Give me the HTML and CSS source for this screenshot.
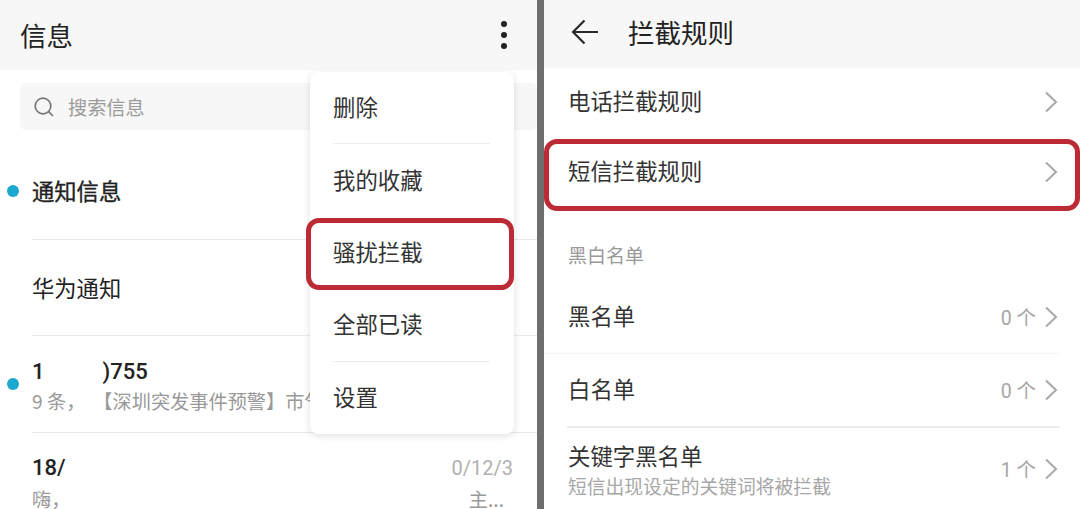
FILE: index.html
```html
<!DOCTYPE html>
<html lang="zh-CN">
<head>
    <meta charset="UTF-8">
    <meta name="viewport" content="width=device-width, initial-scale=1.0">
    <title>拦截规则</title>
    <link rel="stylesheet" href="styles.css">
</head>
<body>
    <div class="screens">
        <section class="pane pane-left">
            <header class="bar bar-left">
                <h1 class="bar-title">信息</h1>
                <svg class="more" width="8" height="30" viewBox="0 0 8 30"><circle cx="4" cy="4" r="3"/><circle cx="4" cy="15" r="3"/><circle cx="4" cy="26" r="3"/></svg>
            </header>

            <div class="search">
                <svg class="search-icon" width="22" height="22" viewBox="0 0 22 22"><circle cx="10" cy="10" r="7.8"/><path d="M15.6 15.6 L20 20"/></svg>
                <span>搜索信息</span>
            </div>

            <div class="msg msg-solo">
                <i class="dot dot-first"></i>
                <div class="msg-name msg-name-cn msg-strong">通知信息</div>
            </div>
            <div class="msg msg-solo msg-second">
                <div class="msg-name msg-name-cn">华为通知</div>
            </div>
            <div class="msg msg-third">
                <i class="dot"></i>
                <div class="msg-name">1<span class="gap-a"></span>)755</div>
                <div class="msg-text msg-clip">9 条，<span class="gap-b"></span>【深圳突发事件预警】市气</div>
            </div>
            <div class="msg msg-last">
                <div class="msg-top">
                    <div class="msg-name">18/</div>
                    <div class="msg-date">0/12/3</div>
                </div>
                <div class="msg-top msg-bottom">
                    <div class="msg-text">嗨，</div>
                    <div class="msg-text msg-tail">主...</div>
                </div>
            </div>

            <div class="menu">
                <div class="menu-item">删除</div>
                <div class="menu-item">我的收藏</div>
                <div class="menu-item marked">骚扰拦截</div>
                <div class="menu-item">全部已读</div>
                <div class="menu-item">设置</div>
            </div>
        </section>

        <section class="pane pane-right">
            <header class="bar bar-right">
                <svg class="back" width="28" height="26" viewBox="0 0 28 26"><path d="M13.5 1.5 L2 13 L13.5 24.5 M2 13 H27"/></svg>
                <h1 class="bar-title">拦截规则</h1>
            </header>

            <div class="rule rule-a">
                <span>电话拦截规则</span>
                <svg class="chev" width="14" height="22" viewBox="0 0 14 22"><path d="M2 1.5 L12 11 L2 20.5"/></svg>
            </div>
            <div class="rule rule-b marked">
                <span>短信拦截规则</span>
                <svg class="chev" width="14" height="22" viewBox="0 0 14 22"><path d="M2 1.5 L12 11 L2 20.5"/></svg>
            </div>

            <div class="group-title">黑白名单</div>

            <div class="rule rule-c">
                <span>黑名单</span>
                <span class="count">0 个</span>
                <svg class="chev" width="14" height="22" viewBox="0 0 14 22"><path d="M2 1.5 L12 11 L2 20.5"/></svg>
            </div>
            <div class="rule rule-d">
                <span>白名单</span>
                <span class="count">0 个</span>
                <svg class="chev" width="14" height="22" viewBox="0 0 14 22"><path d="M2 1.5 L12 11 L2 20.5"/></svg>
            </div>
            <div class="rule rule-e">
                <div class="rule-body">
                    <div class="rule-name">关键字黑名单</div>
                    <div class="rule-note">短信出现设定的关键词将被拦截</div>
                </div>
                <span class="count">1 个</span>
                <svg class="chev" width="14" height="22" viewBox="0 0 14 22"><path d="M2 1.5 L12 11 L2 20.5"/></svg>
            </div>
        </section>
    </div>
</body>
</html>
```

FILE: styles.css
```css
html, body {
    margin: 0;
    height: 509px;
    overflow: hidden;
    background: #fff;
    font-family: "Noto Sans CJK SC", "Noto Sans", sans-serif;
    color: #2a2a2a;
}
.screens {
    display: flex;
    width: 1080px;
    height: 509px;
    background: #6e6e6e;
    gap: 7px;
}
.pane {
    position: relative;
    height: 509px;
    background: #fff;
    overflow: hidden;
}
.pane-left {
    width: 537px;
}
.pane-right {
    width: 536px;
}

/* top bars */
.bar {
    display: flex;
    align-items: center;
    background: #f7f7f7;
}
.bar-left {
    height: 70px;
    padding: 0 29px 0 20px;
    justify-content: space-between;
}
.bar-right {
    height: 68px;
    padding: 0 0 5px 27px;
    box-sizing: border-box;
    gap: 29px;
}
.bar-title {
    margin: 0;
    font-size: 26.5px;
    font-weight: 400;
    line-height: 36px;
    color: #222;
}
.more {
    fill: #222;
}
.back {
    fill: none;
    stroke: #2a2a2a;
    stroke-width: 2.2;
}

/* search */
.search {
    display: flex;
    align-items: center;
    gap: 13px;
    height: 47px;
    margin: 13px 0 14px 20px;
    padding-left: 13px;
    background: #f7f7f7;
    border-radius: 6px;
    color: #9b9b9b;
    font-size: 19.2px;
}
.search-icon {
    fill: none;
    stroke: #777;
    stroke-width: 1.7;
}

/* message list */
.msg {
    position: relative;
    display: flex;
    flex-direction: column;
    justify-content: center;
    box-sizing: border-box;
    height: 97px;
    margin-left: 32px;
    border-bottom: 1px solid #e9e9e9;
}
.msg-solo {
    height: 96px;
    padding-bottom: 4px;
}
.msg-second {
    padding-bottom: 2px;
}
.msg-third {
    padding-top: 4px;
}
.msg-last {
    padding: 20px 24px 0 0;
    justify-content: flex-start;
    border-bottom: 0;
}
.msg-top {
    display: flex;
    justify-content: space-between;
}
.msg-bottom {
    margin-top: 5px;
}
.msg-bottom .msg-text {
    line-height: 22px;
}
.msg-name {
    font-size: 22px;
    line-height: 30px;
    font-family: "Roboto", "Noto Sans CJK SC", sans-serif;
    font-weight: 500;
    color: #222;
}
.msg-name-cn {
    font-family: "Noto Sans CJK SC", sans-serif;
    font-size: 22.3px;
    font-weight: 400;
}
.msg-strong {
    -webkit-text-stroke: 0.35px #222;
}
.gap-a {
    display: inline-block;
    width: 58px;
}
.gap-b {
    display: inline-block;
    width: 8px;
}
.msg-text {
    font-size: 19.2px;
    line-height: 28px;
    color: #999;
    white-space: nowrap;
}
.msg-clip {
    width: 278px;
    overflow: hidden;
}
.msg-tail {
    margin-right: 9px;
}
.msg-date {
    font-size: 20px;
    line-height: 30px;
    color: #b0b0b0;
    font-family: "Roboto", sans-serif;
}
.dot {
    position: absolute;
    left: -25px;
    top: 50%;
    width: 12px;
    height: 12px;
    margin-top: -6px;
    border-radius: 50%;
    background: #1ba9cf;
}
.dot-first {
    margin-top: -7px;
}

/* overflow menu */
.menu {
    position: absolute;
    left: 310px;
    top: 72px;
    width: 204px;
    height: 362px;
    background: #fff;
    border-radius: 8px;
    box-shadow: 0 2px 7px rgba(0, 0, 0, 0.13);
}
.menu-item {
    position: relative;
    display: flex;
    align-items: center;
    box-sizing: border-box;
    height: 72.4px;
    margin: 0 24px 0 23px;
    padding-bottom: 3px;
    border-bottom: 1px solid #ececec;
    font-size: 22.4px;
    color: #333;
}
.menu-item:nth-child(2),
.menu-item:nth-child(3),
.menu-item:nth-child(5) {
    border-bottom: 0;
}

/* red annotation frames */
.marked::after {
    content: "";
    position: absolute;
    box-sizing: border-box;
    border: 5px solid #bb2a35;
    border-radius: 13px;
    pointer-events: none;
}
.menu-item.marked::after {
    left: -27px;
    right: -24px;
    top: 1px;
    bottom: -1px;
}
.rule.marked::after {
    left: 0;
    right: 0;
    top: 3px;
    bottom: -4px;
}

/* rules */
.rule {
    position: relative;
    display: flex;
    align-items: center;
    padding: 0 22px 0 24px;
    font-size: 22.4px;
    color: #333;
}
.rule-a {
    height: 68px;
}
.rule-b {
    height: 71px;
}
.rule-c {
    height: 73px;
    margin-right: 20px;
    padding-right: 2px;
    border-bottom: 1px solid #f4f4f4;
    box-sizing: border-box;
}
.rule-d {
    height: 72px;
    margin-right: 20px;
    padding-right: 2px;
    box-sizing: border-box;
}
.rule-e {
    height: 83px;
    margin: 0 20px 0 23px;
    padding: 0 2px 0 1px;
    border-top: 2px solid #ececec;
    box-sizing: border-box;
}
.rule > span:first-child,
.rule > div:first-child {
    flex: 1;
    margin-bottom: 4px;
}
.rule > .rule-body {
    margin: 10px 0 0;
}
.rule-name {
    line-height: 28px;
}
.rule-note {
    margin-top: 1px;
    font-size: 18.8px;
    line-height: 32px;
    color: #a6a6a6;
}
.count {
    margin: 0 8px 2px 0;
    font-size: 19.5px;
    color: #a6a6a6;
    font-family: "Roboto", "Noto Sans CJK SC", sans-serif;
}
.rule-e .count {
    margin-bottom: 0;
}
.chev {
    fill: none;
    stroke: #a9a9a9;
    stroke-width: 2;
}
.group-title {
    display: flex;
    align-items: center;
    height: 74px;
    padding: 20px 0 0 24px;
    box-sizing: border-box;
    font-size: 19px;
    color: #999;
}
```
